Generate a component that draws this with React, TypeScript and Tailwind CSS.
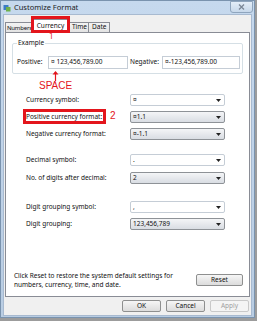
// Customize Format dialog, Currency tab, with red annotation marks

const font = "font-['Noto_Sans','Liberation_Sans',sans-serif]";

function Combo({ value, editable }: { value: string; editable?: boolean }) {
  return (
    <div
      className={
        'w-[95px] h-[12px] flex items-center justify-between pl-[2px] pr-[3px] rounded-[2px] border ' +
        (editable
          ? 'bg-white border-[#c5cdd6]'
          : 'bg-gradient-to-b from-[#f4f5f7] to-[#d9dde3] border-[#8e9297]')
      }
    >
      <span className="text-[6.5px] leading-none text-[#111]">{value}</span>
      <svg width="5" height="3" viewBox="0 0 5 3">
        <path d="M0 0h5L2.5 3z" fill="#222" />
      </svg>
    </div>
  );
}

function Row({ label, children, className = '' }: { label: string; children: React.ReactNode; className?: string }) {
  return (
    <div className={'flex items-center h-[12px] ' + className}>
      <span className="w-[104px] text-[6.5px] leading-none text-[#111]">{label}</span>
      {children}
    </div>
  );
}

function Btn({ label, disabled }: { label: string; disabled?: boolean }) {
  return (
    <div
      className={
        'h-[12px] flex items-center justify-center rounded-[2px] border text-[6.5px] leading-none ' +
        (disabled
          ? 'border-[#c9c9c9] bg-[#f4f4f4] text-[#a0a0a0]'
          : 'border-[#8e8f8f] bg-gradient-to-b from-[#f6f6f6] to-[#dcdcdc] text-[#111]')
      }
    >
      {label}
    </div>
  );
}

export default function App() {
  return (
    <div className={'relative w-[257px] h-[321px] bg-[#9c9c9c] overflow-hidden ' + font}>
      {/* Window */}
      <div className="w-[255px] h-[318px] bg-gradient-to-b from-[#c6d9ee] to-[#b9cde3] border border-[#7a93ae] flex flex-col">
        {/* Title bar */}
        <div className="h-[13px] flex items-center relative">
          <svg className="ml-[2px]" width="8" height="8" viewBox="0 0 8 8">
            <rect x="0.5" y="1" width="5" height="5" fill="#3b7cc4" />
            <rect x="3" y="3" width="4.5" height="4.5" fill="#6fb04a" />
          </svg>
          <span className="ml-[3px] text-[7.5px] leading-none text-[#1b1b1b]">Customize Format</span>
          <div className="ml-auto mr-[1px] w-[23px] h-[12px] -mt-[1px] rounded-b-[3px] border border-[#8fa5bd] bg-gradient-to-b from-[#e4eef8] to-[#c7d8ea] flex items-center justify-center">
            <svg width="7" height="6" viewBox="0 0 7 6">
              <path d="M1 0.5l5 5M6 0.5l-5 5" stroke="#7b8796" strokeWidth="1.3" />
            </svg>
          </div>
        </div>

        {/* Body */}
        <div className="mx-[2px] h-[302px] bg-[#f0f0f0] border border-[#a8bad0] flex flex-col">
          {/* Tabs */}
          <div className="mt-[4px] pl-[1px] flex items-end h-[14px] relative">
            <div className="w-[28px] h-[10px] mb-[1px] border border-[#898c95] border-b-0 bg-gradient-to-b from-[#f3f3f3] to-[#e3e3e3] text-[6px] tracking-[-0.2px] leading-none text-[#111] flex items-center pl-[1px] overflow-hidden">
              Numbers
            </div>
            <div className="w-[37px] h-[14px] border border-[#898c95] border-b-0 bg-white text-[6.5px] leading-none text-[#111] flex items-center justify-center -mx-[1px]">
              Currency
            </div>
            <div className="w-[21px] h-[10px] mb-[1px] border border-[#898c95] border-b-0 bg-gradient-to-b from-[#f3f3f3] to-[#e3e3e3] text-[6.5px] leading-none text-[#111] flex items-center pl-[3px]">
              Time
            </div>
            <div className="w-[22px] h-[10px] mb-[1px] -ml-[1px] border border-[#898c95] border-b-0 bg-gradient-to-b from-[#f3f3f3] to-[#e3e3e3] text-[6.5px] leading-none text-[#111] flex items-center pl-[3px]">
              Date
            </div>
          </div>

          {/* Tab panel */}
          <div className="mx-[1px] -mt-[1px] h-[265px] bg-white border border-[#898c95] flex flex-col">
            {/* Example group */}
            <div className="relative mt-[10px] mx-[6px] h-[31px] border border-[#d5dfe5] rounded-[2px] flex items-center">
              <span className="absolute -top-[4px] left-[4px] bg-white px-[1px] text-[6.5px] leading-none text-[#111]">
                Example
              </span>
              <span className="ml-[4px] w-[31px] text-[6.5px] leading-none text-[#111] mt-[8px]">Positive:</span>
              <div className="mt-[8px] w-[80px] h-[13px] border border-[#c5cdd6] flex items-center pl-[2px] text-[6.5px] leading-none text-[#111]">
                ¤ 123,456,789.00
              </div>
              <span className="ml-[2px] w-[32px] text-[6.5px] leading-none text-[#111] mt-[8px]">Negative:</span>
              <div className="mt-[8px] w-[78px] h-[13px] border border-[#c5cdd6] flex items-center pl-[2px] text-[6.5px] leading-none text-[#111]">
                ¤-123,456,789.00
              </div>
            </div>

            {/* Settings */}
            <div className="pl-[20px] mt-[20px] flex flex-col">
              <Row label="Currency symbol:">
                <Combo value="¤" editable />
              </Row>
              <Row label="Positive currency format:" className="mt-[5px]">
                <Combo value="¤1.1" />
              </Row>
              <Row label="Negative currency format:" className="mt-[5px]">
                <Combo value="¤-1.1" />
              </Row>
              <Row label="Decimal symbol:" className="mt-[14px]">
                <Combo value="." editable />
              </Row>
              <Row label="No. of digits after decimal:" className="mt-[6px]">
                <Combo value="2" />
              </Row>
              <Row label="Digit grouping symbol:" className="mt-[17px]">
                <Combo value="," editable />
              </Row>
              <Row label="Digit grouping:" className="mt-[5px]">
                <Combo value="123,456,789" />
              </Row>
            </div>

            {/* Reset */}
            <div className="mt-auto mb-[7px] pl-[8px] pr-[6px] flex items-center justify-between">
              <p className="text-[6.5px] leading-[9px] text-[#111]">
                Click Reset to restore the system default settings for
                <br />
                numbers, currency, time, and date.
              </p>
              <div className="w-[47px]">
                <Btn label="Reset" />
              </div>
            </div>
          </div>

          {/* Dialog buttons */}
          <div className="mt-[3px] pr-[2px] flex justify-end gap-[5px]">
            <div className="w-[39px]">
              <Btn label="OK" />
            </div>
            <div className="w-[39px]">
              <Btn label="Cancel" />
            </div>
            <div className="w-[39px]">
              <Btn label="Apply" disabled />
            </div>
          </div>
        </div>
      </div>

      {/* Annotations */}
      <div className="absolute left-[31px] top-[16px] w-[39px] h-[17px] border-[3px] border-[#e3151c]" />
      <span className="absolute left-[49px] top-[32px] text-[8px] leading-none text-[#e3151c]">1</span>
      <svg className="absolute left-[52px] top-[71px]" width="7" height="10" viewBox="0 0 7 10">
        <path d="M3.5 10V2" stroke="#e3151c" strokeWidth="1.2" />
        <path d="M0.5 3.5L3.5 0 6.5 3.5z" fill="#e3151c" />
      </svg>
      <span className="absolute left-[39px] top-[81px] text-[10px] leading-none text-[#e3151c] font-['Liberation_Sans',sans-serif]">
        SPACE
      </span>
      <div className="absolute left-[23px] top-[109px] w-[83px] h-[15px] border-[3px] border-[#e3151c]" />
      <span className="absolute left-[110px] top-[111px] text-[10px] leading-none text-[#e3151c] font-['Liberation_Sans',sans-serif]">
        2
      </span>
    </div>
  );
}
